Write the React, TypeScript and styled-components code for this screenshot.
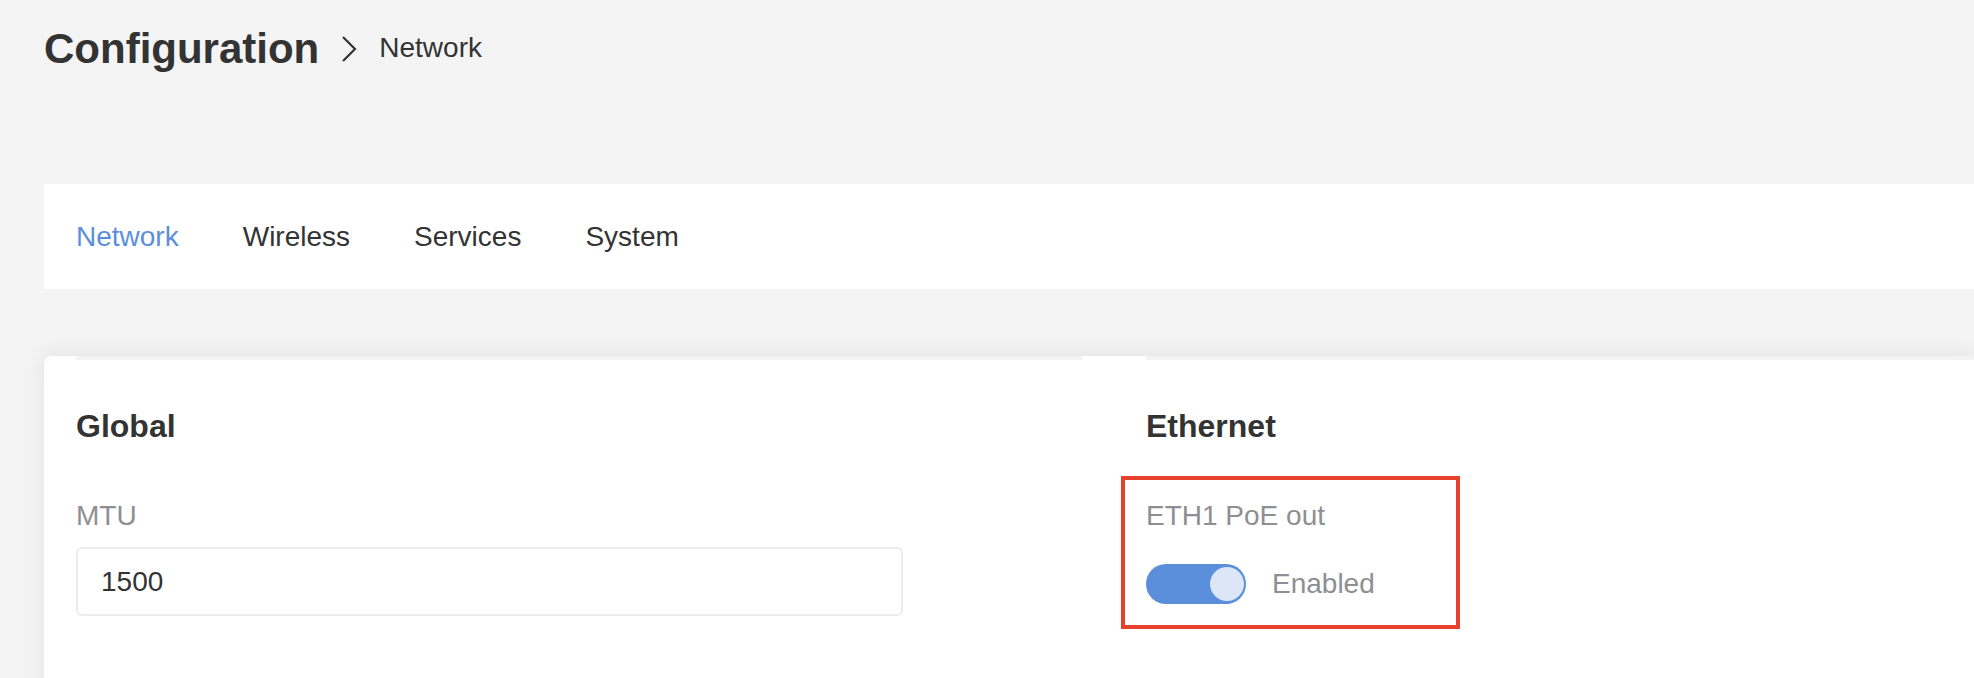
import styled, { createGlobalStyle } from 'styled-components';

const GlobalStyle = createGlobalStyle`
  html, body {
    margin: 0;
    padding: 0;
    background: #f4f4f4;
    overflow: hidden;
  }
  body {
    font-family: 'Liberation Sans', Arial, Helvetica, sans-serif;
    color: #333333;
  }
`;

const Page = styled.div`
  padding-left: 44px;
  min-height: 678px;
`;

const Header = styled.header`
  display: flex;
  align-items: center;
  height: 98px;
  margin-bottom: 86px;
`;

const Title = styled.h1`
  margin: 0;
  font-size: 42px;
  line-height: 1;
  font-weight: 700;
  color: #333333;
`;

const Chevron = styled.svg`
  width: 16px;
  height: 28px;
  margin: 0 22px 0 22px;
  flex-shrink: 0;
`;

const Crumb = styled.span`
  font-size: 28px;
  line-height: 1;
  color: #333333;
  margin-top: -2px;
`;

const TabBar = styled.nav`
  display: flex;
  align-items: center;
  gap: 64px;
  height: 105px;
  padding-left: 32px;
  background: #ffffff;
`;

const Tab = styled.a<{ $active?: boolean }>`
  font-size: 28px;
  line-height: 1;
  color: ${(p) => (p.$active ? '#5b8fdd' : '#333333')};
  text-decoration: none;
  cursor: pointer;
`;

const Card = styled.section`
  margin-top: 67px;
  min-height: 360px;
  padding-left: 32px;
  background: #ffffff;
  border-radius: 8px 0 0 0;
  box-shadow: 0 -2px 24px rgba(0, 0, 0, 0.08);
  display: grid;
  grid-template-columns: 1006px 1fr;
  column-gap: 64px;
  align-items: start;
`;

const Column = styled.div`
  border-top: 4px solid #f3f3f3;
`;

const SectionTitle = styled.h2`
  margin: 50px 0 0;
  font-size: 32px;
  line-height: 1;
  font-weight: 700;
  color: #333333;
`;

const Field = styled.div<{ $highlight?: boolean }>`
  position: relative;
  margin-top: 60px;
  width: fit-content;

  ${(p) =>
    p.$highlight &&
    `
    &::after {
      content: '';
      position: absolute;
      top: -26px;
      left: -25px;
      width: 331px;
      height: 145px;
      border: 4px solid #e5412b;
      pointer-events: none;
    }
  `}
`;

const Label = styled.div`
  font-size: 28px;
  line-height: 1;
  color: #8e8e93;
`;

const Input = styled.input`
  display: block;
  box-sizing: border-box;
  margin-top: 17px;
  width: 827px;
  height: 69px;
  padding: 0 23px;
  border: 2px solid #ededed;
  border-radius: 6px;
  background: #ffffff;
  font-family: inherit;
  font-size: 28px;
  color: #333333;
  outline: none;
`;

const SwitchRow = styled.div`
  display: flex;
  align-items: center;
  gap: 26px;
  margin-top: 34px;
`;

const Track = styled.button<{ $on: boolean }>`
  position: relative;
  width: 100px;
  height: 40px;
  padding: 0;
  border: none;
  border-radius: 20px;
  background: ${(p) => (p.$on ? '#5b8edb' : '#cfcfd4')};
  cursor: pointer;
`;

const Knob = styled.span<{ $on: boolean }>`
  position: absolute;
  top: 3px;
  left: ${(p) => (p.$on ? '64px' : '3px')};
  width: 34px;
  height: 34px;
  border-radius: 50%;
  background: #dde6f7;
`;

const SwitchText = styled.span`
  font-size: 28px;
  line-height: 1;
  color: #8e8e93;
`;

const tabs = ['Network', 'Wireless', 'Services', 'System'];

const App = () => {
  return (
    <>
      <GlobalStyle />
      <Page>
        <Header>
          <Title>Configuration</Title>
          <Chevron viewBox='0 0 16 28' fill='none'>
            <polyline points='2,2 14,14 2,26' stroke='#333333' strokeWidth='2.2' />
          </Chevron>
          <Crumb>Network</Crumb>
        </Header>

        <TabBar>
          {tabs.map((t, i) => (
            <Tab key={t} $active={i === 0}>
              {t}
            </Tab>
          ))}
        </TabBar>

        <Card>
          <Column>
            <SectionTitle>Global</SectionTitle>
            <Field>
              <Label>MTU</Label>
              <Input defaultValue='1500' />
            </Field>
          </Column>
          <Column>
            <SectionTitle>Ethernet</SectionTitle>
            <Field $highlight>
              <Label>ETH1 PoE out</Label>
              <SwitchRow>
                <Track $on>
                  <Knob $on />
                </Track>
                <SwitchText>Enabled</SwitchText>
              </SwitchRow>
            </Field>
          </Column>
        </Card>
      </Page>
    </>
  );
};

export default App;
